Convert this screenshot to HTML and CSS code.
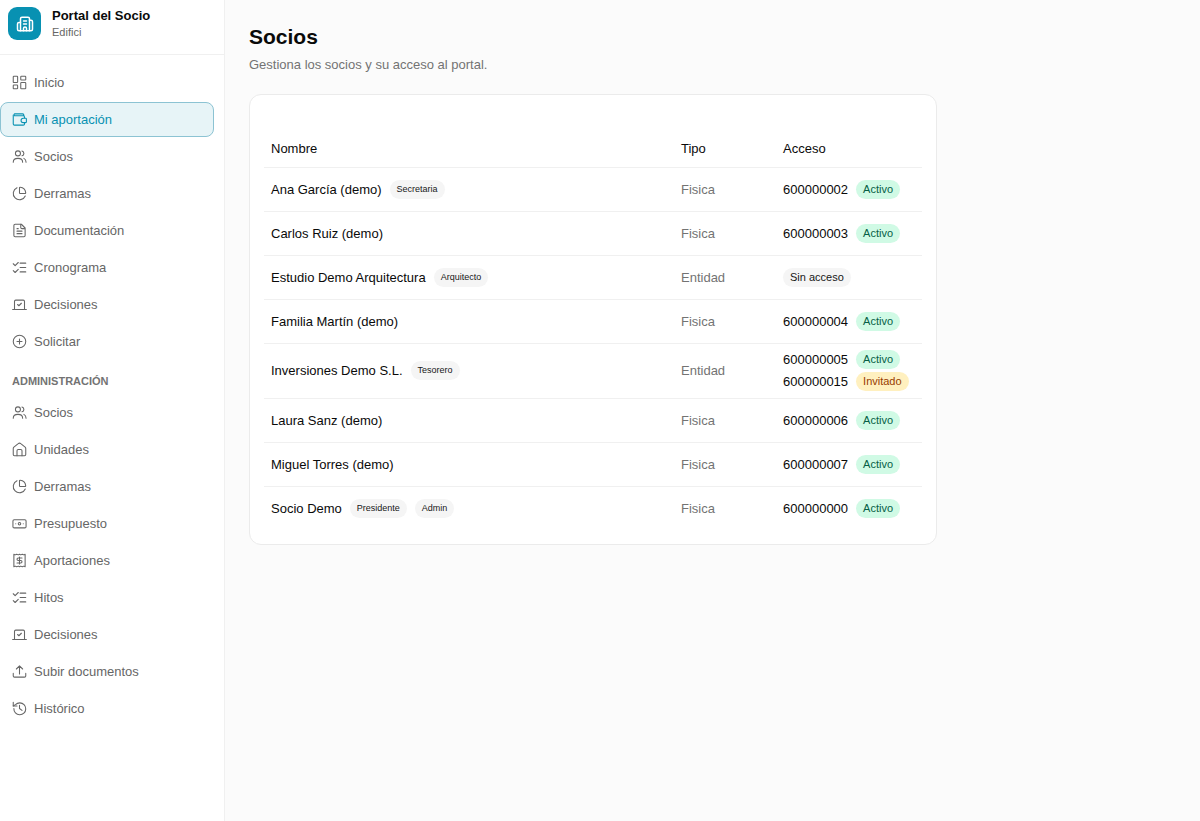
FILE: index.html
```html
<!DOCTYPE html>
<html lang="es">
<head>
<meta charset="utf-8">
<meta name="viewport" content="width=device-width, initial-scale=1.0">
<title>Portal del Socio</title>
<link rel="stylesheet" href="styles.css">
</head>
<body>

<!-- icons -->
<svg class="sprite" aria-hidden="true">
  <symbol id="i-building" viewBox="0 0 24 24"><path d="M10 12h4M10 8h4M14 21v-3a2 2 0 0 0-4 0v3"/><path d="M6 10H4a2 2 0 0 0-2 2v7a2 2 0 0 0 2 2h16a2 2 0 0 0 2-2V9a2 2 0 0 0-2-2h-2"/><path d="M6 21V5a2 2 0 0 1 2-2h8a2 2 0 0 1 2 2v16"/></symbol>
  <symbol id="i-dashboard" viewBox="0 0 24 24"><rect width="7" height="10" x="2" y="2" rx="1"/><rect width="8" height="6" x="14" y="2" rx="1"/><rect width="8" height="10" x="14" y="12" rx="1"/><rect width="7" height="6" x="2" y="16" rx="1"/></symbol>
  <symbol id="i-wallet" viewBox="0 0 24 24"><path d="M20 9V8a2 2 0 0 0-2-2H4a2 2 0 0 1 0-3h13a2 2 0 0 1 2 2v1"/><path d="M2 5v14a2 2 0 0 0 2 2h14a2 2 0 0 0 2-2v-1"/><path d="M22 10h-4a3.500 3.500 0 0 0 0 7h4a1 1 0 0 0 1-1v-5a1 1 0 0 0-1-1z"/></symbol>
  <symbol id="i-users" viewBox="0 0 24 24"><circle cx="9.500" cy="7" r="4"/><path d="M2 21c0-4 3-6 7.500-6s7.500 2 7.500 6M16 3.130a4 4 0 0 1 0 7.750M19 15c2 1 3.500 3 3.500 6"/></symbol>
  <symbol id="i-pie" viewBox="0 0 24 24"><path d="M21 12c.552 0 1.005-.449.95-.998a10 10 0 0 0-8.953-8.951c-.55-.055-.998.398-.998.95v8a1 1 0 0 0 1 1z"/><path d="M21.21 15.89A10 10 0 1 1 8 2.83"/></symbol>
  <symbol id="i-file" viewBox="0 0 24 24"><path d="M15 2H5a2 2 0 0 0-2 2v16a2 2 0 0 0 2 2h14a2 2 0 0 0 2-2V8Z"/><path d="M14 2v5a2 2 0 0 0 2 2h4M10 9H8M16 13H8M16 17H8"/></symbol>
  <symbol id="i-list" viewBox="0 0 24 24"><path d="M13 5h9M13 12h9M13 19h9M2 17l3 3 5-5M2 6l3 3 5-5"/></symbol>
  <symbol id="i-vote" viewBox="0 0 24 24"><path d="m9 12 2 2 4-4"/><path d="M4 7c0-1.100.9-2 2-2h12a2 2 0 0 1 2 2v13H4V7Z"/><path d="M23 20H1"/></symbol>
  <symbol id="i-plus" viewBox="0 0 24 24"><circle cx="12" cy="12" r="10"/><path d="M8 12h8M12 8v8"/></symbol>
  <symbol id="i-house" viewBox="0 0 24 24"><path d="M16 22v-8a2 2 0 0 0-2-2h-4a2 2 0 0 0-2 2v8"/><path d="M2 10.500a3 3 0 0 1 1-2.200l7-5.600a3 3 0 0 1 4 0l7 5.600a3 3 0 0 1 1 2.200V20a2 2 0 0 1-2 2H4a2 2 0 0 1-2-2z"/></symbol>
  <symbol id="i-banknote" viewBox="0 0 24 24"><rect width="21" height="13" x="1.500" y="6" rx="2"/><circle cx="12" cy="12.500" r="2"/><path d="M6 12.500h.01M18 12.500h.01"/></symbol>
  <symbol id="i-receipt" viewBox="0 0 24 24"><path d="M3 2v20l2-1 2.500 1 2.500-1 2 1 2-1 2.500 1 2.500-1 2 1V2l-2 1-2.500-1L14 3l-2-1-2 1-2.500-1L5 3Z"/><path d="M16 8h-6a2 2 0 1 0 0 4h4a2 2 0 1 1 0 4H8M12 17.500v-11"/></symbol>
  <symbol id="i-upload" viewBox="0 0 24 24"><path d="M12 3v13M17 8l-5-5-5 5M22 15v4a2 2 0 0 1-2 2H4a2 2 0 0 1-2-2v-4"/></symbol>
  <symbol id="i-history" viewBox="0 0 24 24"><path d="M3 12a9.500 9.500 0 1 0 9.500-9 10 10 0 0 0-7 2.740L2 8"/><path d="M2 2v6h6M12 7v5l4 3"/></symbol>
</svg>

<div class="layout">
  <aside class="sidebar">
    <div class="brand">
      <span class="brand-logo"><svg class="icon icon-lg"><use href="#i-building"/></svg></span>
      <div>
        <div class="brand-name">Portal del Socio</div>
        <div class="brand-sub">Edifici</div>
      </div>
    </div>
    <nav class="nav">
      <a href="#"><svg class="icon"><use href="#i-dashboard"/></svg>Inicio</a>
      <a href="#" class="active" aria-current="page"><svg class="icon"><use href="#i-wallet"/></svg>Mi aportación</a>
      <a href="#"><svg class="icon"><use href="#i-users"/></svg>Socios</a>
      <a href="#"><svg class="icon"><use href="#i-pie"/></svg>Derramas</a>
      <a href="#"><svg class="icon"><use href="#i-file"/></svg>Documentación</a>
      <a href="#"><svg class="icon"><use href="#i-list"/></svg>Cronograma</a>
      <a href="#"><svg class="icon"><use href="#i-vote"/></svg>Decisiones</a>
      <a href="#"><svg class="icon"><use href="#i-plus"/></svg>Solicitar</a>
    </nav>
    <h2 class="nav-title">ADMINISTRACIÓN</h2>
    <nav class="nav">
      <a href="#"><svg class="icon"><use href="#i-users"/></svg>Socios</a>
      <a href="#"><svg class="icon"><use href="#i-house"/></svg>Unidades</a>
      <a href="#"><svg class="icon"><use href="#i-pie"/></svg>Derramas</a>
      <a href="#"><svg class="icon"><use href="#i-banknote"/></svg>Presupuesto</a>
      <a href="#"><svg class="icon"><use href="#i-receipt"/></svg>Aportaciones</a>
      <a href="#"><svg class="icon"><use href="#i-list"/></svg>Hitos</a>
      <a href="#"><svg class="icon"><use href="#i-vote"/></svg>Decisiones</a>
      <a href="#"><svg class="icon"><use href="#i-upload"/></svg>Subir documentos</a>
      <a href="#"><svg class="icon"><use href="#i-history"/></svg>Histórico</a>
    </nav>
  </aside>

  <main class="main">
    <h1>Socios</h1>
    <p class="lead">Gestiona los socios y su acceso al portal.</p>

    <section class="card">
      <table>
        <thead>
          <tr><th scope="col">Nombre</th><th scope="col" class="col-type">Tipo</th><th scope="col" class="col-access">Acceso</th></tr>
        </thead>
        <tbody>
          <tr>
            <td><div class="line">Ana García (demo) <span class="badge role">Secretaria</span></div></td>
            <td class="type">Fisica</td>
            <td><div class="line">600000002 <span class="badge ok">Activo</span></div></td>
          </tr>
          <tr>
            <td>Carlos Ruiz (demo)</td>
            <td class="type">Fisica</td>
            <td><div class="line">600000003 <span class="badge ok">Activo</span></div></td>
          </tr>
          <tr>
            <td><div class="line">Estudio Demo Arquitectura <span class="badge role">Arquitecto</span></div></td>
            <td class="type">Entidad</td>
            <td><div class="line"><span class="badge">Sin acceso</span></div></td>
          </tr>
          <tr>
            <td>Familia Martín (demo)</td>
            <td class="type">Fisica</td>
            <td><div class="line">600000004 <span class="badge ok">Activo</span></div></td>
          </tr>
          <tr>
            <td><div class="line">Inversiones Demo S.L. <span class="badge role">Tesorero</span></div></td>
            <td class="type">Entidad</td>
            <td>
              <div class="line">600000005 <span class="badge ok">Activo</span></div>
              <div class="line">600000015 <span class="badge warn">Invitado</span></div>
            </td>
          </tr>
          <tr>
            <td>Laura Sanz (demo)</td>
            <td class="type">Fisica</td>
            <td><div class="line">600000006 <span class="badge ok">Activo</span></div></td>
          </tr>
          <tr>
            <td>Miguel Torres (demo)</td>
            <td class="type">Fisica</td>
            <td><div class="line">600000007 <span class="badge ok">Activo</span></div></td>
          </tr>
          <tr>
            <td><div class="line">Socio Demo <span class="badge role">Presidente</span> <span class="badge role">Admin</span></div></td>
            <td class="type">Fisica</td>
            <td><div class="line">600000000 <span class="badge ok">Activo</span></div></td>
          </tr>
        </tbody>
      </table>
    </section>
  </main>
</div>

</body>
</html>
```
FILE: styles.css
```css
* {
    box-sizing: border-box;
}
body {
    margin: 0;
    font-family: "Helvetica Neue", Helvetica, "Liberation Sans", Arial, sans-serif;
    font-size: 13px;
    line-height: 19px;
    color: #0a0a0a;
    background-color: #fbfbfb;
}
h1,
h2,
p {
    margin: 0;
}
.sprite {
    display: none;
}
.icon {
    flex: none;
    width: 15px;
    height: 15px;
    fill: none;
    stroke: currentColor;
    stroke-width: 1.7;
    stroke-linecap: round;
    stroke-linejoin: round;
}
.icon-lg {
    width: 18px;
    height: 18px;
    stroke-width: 2;
}

.layout {
    display: flex;
    min-height: 100vh;
}

/* sidebar */
.sidebar {
    flex: none;
    width: 225px;
    background-color: #fff;
    border-right: 1px solid #f0f0f0;
}
.brand {
    display: flex;
    gap: 11px;
    padding: 7px 8px 14px;
    border-bottom: 1px solid #f0f0f0;
}
.brand-logo {
    display: flex;
    align-items: center;
    justify-content: center;
    width: 33px;
    height: 33px;
    border-radius: 9px;
    color: #fff;
    background-color: #0891b2;
}
.brand-name {
    font-weight: bold;
    line-height: 18px;
}
.brand-sub {
    font-size: 11px;
    line-height: 15px;
    color: #666;
}
.nav {
    display: flex;
    flex-direction: column;
    gap: 2px;
    padding-right: 10px;
}
.brand + .nav {
    padding-top: 10px;
}
.nav a {
    display: flex;
    align-items: center;
    gap: 7px;
    padding: 7px 11px;
    border: 1px solid transparent;
    border-radius: 8px;
    color: #666;
    text-decoration: none;
}
.nav a:hover {
    background-color: #f5f5f5;
}
.nav a.active {
    color: #0891b2;
    background-color: #e7f4f7;
    border-color: #8cc3d3;
}
.nav-title {
    padding: 13px 12px 5px;
    font-size: 11px;
    line-height: 18px;
    color: #737373;
}

/* content */
.main {
    flex: 1;
    min-width: 0;
    padding: 24px;
}
h1 {
    font-size: 21px;
    line-height: 26px;
}
.lead {
    margin: 5px 0 20px;
    color: #737373;
}
.card {
    max-width: 688px;
    padding: 36px 14px 13px;
    background-color: #fff;
    border: 1px solid #ebebeb;
    border-radius: 12px;
}
table {
    width: 100%;
    table-layout: fixed;
    border-spacing: 0;
}
th,
td {
    height: 44px;
    padding: 6px 7px 7px;
    text-align: left;
    vertical-align: middle;
    border-bottom: 1px solid #f0f0f0;
}
th {
    height: 37px;
    font-weight: normal;
}
tr:last-child td {
    border-bottom-color: transparent;
}
.col-type {
    width: 102px;
}
.col-access {
    width: 146px;
}
.type {
    color: #737373;
}
.line {
    display: flex;
    align-items: center;
    gap: 8px;
}
.line + .line {
    margin-top: 3px;
}
.badge {
    padding: 2px 7px;
    border-radius: 10px;
    font-size: 11px;
    line-height: 15px;
    color: #171717;
    background-color: #f5f5f5;
}
.badge.role {
    font-size: 9px;
}
.badge.ok {
    color: #065f46;
    background-color: #d0fae5;
}
.badge.warn {
    color: #973c00;
    background-color: #fff0bf;
}
```
